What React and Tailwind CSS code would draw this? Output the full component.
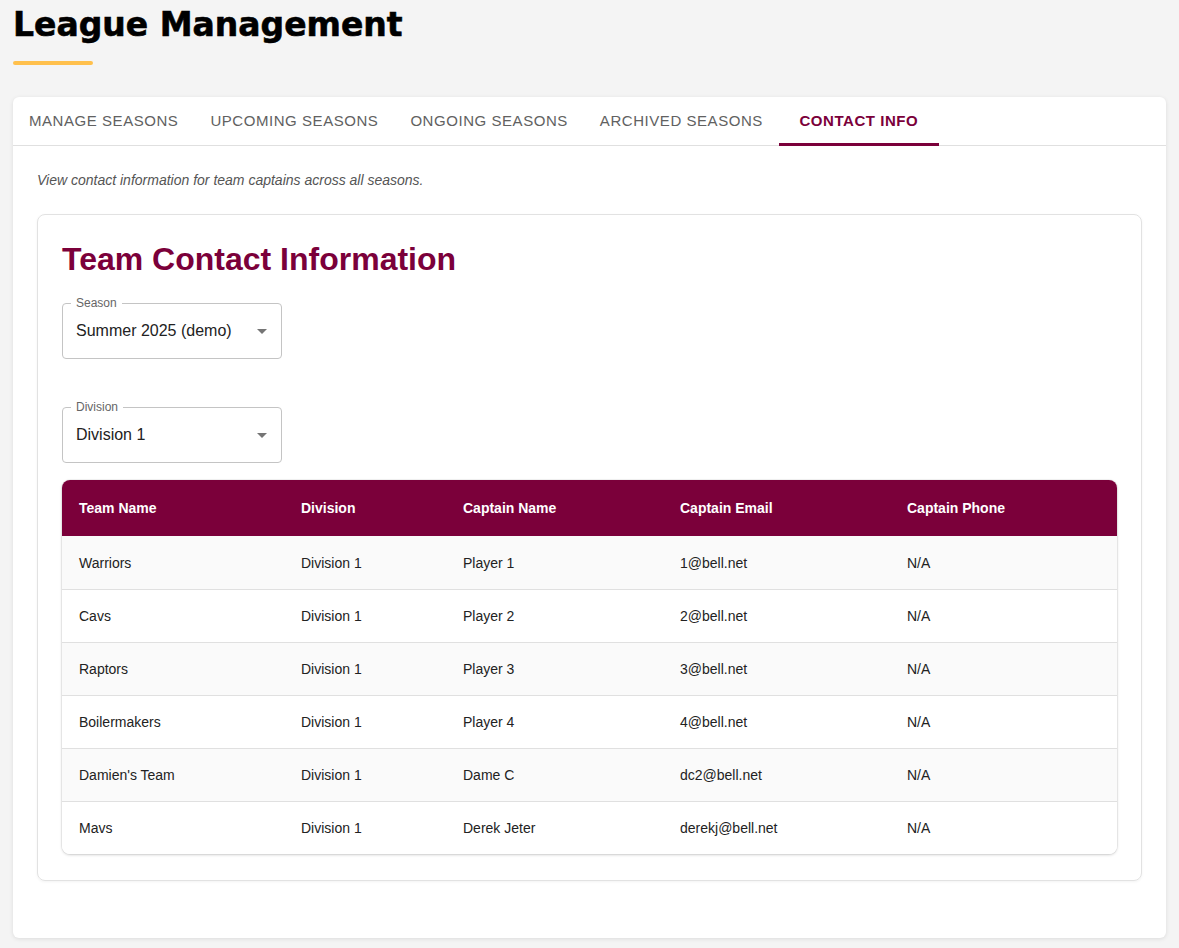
import { useState } from "react";

const tabs = [
  "Manage Seasons",
  "Upcoming Seasons",
  "Ongoing Seasons",
  "Archived Seasons",
  "Contact Info",
];

const teams = [
  { name: "Warriors", division: "Division 1", captain: "Player 1", email: "1@bell.net", phone: "N/A" },
  { name: "Cavs", division: "Division 1", captain: "Player 2", email: "2@bell.net", phone: "N/A" },
  { name: "Raptors", division: "Division 1", captain: "Player 3", email: "3@bell.net", phone: "N/A" },
  { name: "Boilermakers", division: "Division 1", captain: "Player 4", email: "4@bell.net", phone: "N/A" },
  { name: "Damien's Team", division: "Division 1", captain: "Dame C", email: "dc2@bell.net", phone: "N/A" },
  { name: "Mavs", division: "Division 1", captain: "Derek Jeter", email: "derekj@bell.net", phone: "N/A" },
];

function SelectBox({ label, value, className }) {
  return (
    <div className={`relative w-[220px] h-[56px] rounded border border-[#c4c4c4] flex items-center pl-[13px] pr-3 ${className}`}>
      <span className="absolute -top-[8px] left-[8px] px-[5px] bg-white text-[12px] leading-[14px] text-[#666]">
        {label}
      </span>
      <span className="flex-1 text-[16px] text-[#222]">{value}</span>
      <svg width="24" height="24" viewBox="0 0 24 24" className="fill-[#757575] -mr-[5px]">
        <path d="M7 10l5 5 5-5z" />
      </svg>
    </div>
  );
}

export default function App() {
  const [active, setActive] = useState(4);

  return (
    <div className="min-h-screen bg-[#f4f4f4] p-[13px] pt-[8px] font-['Liberation_Sans',Arial,sans-serif]">
      <h1 className="font-['DejaVu_Sans',sans-serif] font-bold text-[33px] leading-[33px] text-black [-webkit-text-stroke:0.6px_black]">
        League Management
      </h1>
      <div className="mt-[20px] w-[80px] h-[4px] rounded-full bg-[#ffc04c]" />

      <div className="mt-[32px] bg-white rounded-md shadow-[0_1px_4px_rgba(0,0,0,0.1)]">
        <div className="flex border-b border-[#e0e0e0] h-[49px]">
          {tabs.map((t, i) => (
            <button
              key={t}
              onClick={() => setActive(i)}
              className={`relative px-4 h-[48px] uppercase text-[15px] tracking-[0.55px] ${
                active === i ? "font-bold text-[#7b003a] w-[160px]" : "text-[#616161]"
              }`}
            >
              {t}
              {active === i && <span className="absolute left-0 right-0 -bottom-[1px] h-[3px] bg-[#7b003a]" />}
            </button>
          ))}
        </div>

        <div className="px-6 pt-6 pb-[57px]">
          <p className="italic text-[14px] leading-[20px] text-[#555]">
            View contact information for team captains across all seasons.
          </p>

          <div className="mt-[24px] border border-[#e2e2e2] rounded-lg px-6 pt-6 pb-[26px] shadow-[0_1px_3px_rgba(0,0,0,0.05)]">
            <h2 className="text-[32px] leading-[40px] font-bold text-[#7b003a]">Team Contact Information</h2>

            <SelectBox label="Season" value="Summer 2025 (demo)" className="mt-6" />
            <SelectBox label="Division" value="Division 1" className="mt-[48px]" />

            <div className="mt-[17px] rounded-lg overflow-hidden shadow-[0_1px_3px_rgba(0,0,0,0.18),0_0_0_1px_rgba(0,0,0,0.04)]">
              <table className="w-full table-fixed text-[14px] text-[#222]">
                <colgroup>
                  <col className="w-[223px]" />
                  <col className="w-[162px]" />
                  <col className="w-[217px]" />
                  <col className="w-[227px]" />
                  <col className="w-[226px]" />
                </colgroup>
                <thead>
                  <tr className="bg-[#7b003a] text-white h-[56px]">
                    <th className="text-left font-bold pl-[17px] pr-4">Team Name</th>
                    <th className="text-left font-bold px-4">Division</th>
                    <th className="text-left font-bold px-4">Captain Name</th>
                    <th className="text-left font-bold px-4">Captain Email</th>
                    <th className="text-left font-bold px-4">Captain Phone</th>
                  </tr>
                </thead>
                <tbody>
                  {teams.map((team, i) => (
                    <tr
                      key={team.name}
                      className={`h-[53px] ${i < teams.length - 1 ? "border-b border-[#e0e0e0]" : ""} ${
                        i % 2 === 0 ? "bg-[#fafafa]" : "bg-white"
                      }`}
                    >
                      <td className="pl-[17px] pr-4 pt-[2px]">{team.name}</td>
                      <td className="px-4 pt-[2px]">{team.division}</td>
                      <td className="px-4 pt-[2px]">{team.captain}</td>
                      <td className="px-4 pt-[2px]">{team.email}</td>
                      <td className="px-4 pt-[2px]">{team.phone}</td>
                    </tr>
                  ))}
                </tbody>
              </table>
            </div>
          </div>
        </div>
      </div>
    </div>
  );
}
